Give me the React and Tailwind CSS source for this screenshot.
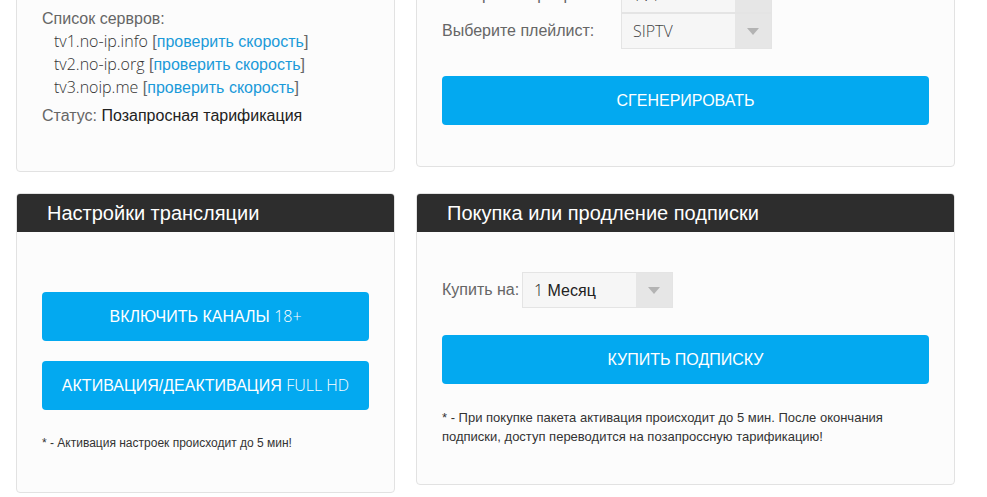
import React from 'react'

const cyr = { fontFamily: '"Liberation Sans", Arial, sans-serif' }

function Lat({ children, className = '' }) {
  // latin / digits in a lighter web-ish font, cyrillic falls back to Arial
  return (
    <span className={'font-light ' + className} style={{ fontFamily: '"Open Sans", sans-serif' }}>
      {children}
    </span>
  )
}

function Select({ children }) {
  return (
    <div className="flex h-[36px] w-[151px] border border-[#e4e4e4] bg-[#f6f6f6]">
      <div className="flex-1 self-center pl-[11px] text-[16px] text-[#222]">{children}</div>
      <div className="flex w-[36px] items-center justify-center bg-[#e6e6e6]">
        <svg width="12" height="7" viewBox="0 0 12 7">
          <path d="M0 0h12L6 7z" fill="#b3b3b3" />
        </svg>
      </div>
    </div>
  )
}

function BlueButton({ children }) {
  return (
    <button className="flex h-[49px] w-full items-center justify-center rounded-[4px] bg-[#03a9f0] text-[16px] uppercase text-white">
      <span>{children}</span>
    </button>
  )
}

function LinkLine({ host }) {
  return (
    <div className="pl-[12px]">
      <Lat className="text-[#333]">{host}</Lat>{' '}
      <span className="text-[#666]">[</span>
      <span className="text-[#1a9ad9]">проверить скорость</span>
      <span className="text-[#666]">]</span>
    </div>
  )
}

function Panel({ title, className = '', children }) {
  return (
    <div className={'rounded-[4px] border border-[#e2e2e2] bg-[#fcfcfc] ' + className}>
      <div className="flex h-[38px] items-center rounded-t-[3px] bg-[#2d2d2d] pl-[30px] text-[20px] text-white">
        {title}
      </div>
      {children}
    </div>
  )
}

export default function App() {
  return (
    <div className="min-h-screen overflow-hidden bg-white" style={cyr}>
      <div className="pl-[16px]">
        {/* top row, cut off by the window */}
        <div className="-mt-[50px] flex items-start gap-[21px]">
          <div className="w-[379px] rounded-[4px] border border-[#e2e2e2] bg-[#fcfcfc] px-[25px] pt-[56px] pb-[44px] text-[16px] leading-[23px] text-[#666]">
            <div>Список сервров:</div>
            <LinkLine host="tv1.no-ip.info" />
            <LinkLine host="tv2.no-ip.org" />
            <LinkLine host="tv3.noip.me" />
            <div className="mt-[5px]">
              Статус: <span className="text-[#222]">Позапросная тарификация</span>
            </div>
          </div>

          <div className="w-[539px] rounded-[4px] border border-[#e2e2e2] bg-[#fcfcfc] px-[25px] pt-[26px] pb-[41px]">
            <div className="flex items-center text-[16px] text-[#666]">
              <div className="w-[179px]">Выберите сервер:</div>
              <Select><Lat className="text-[#444]">TV1</Lat></Select>
            </div>
            <div className="flex items-center text-[16px] text-[#666]">
              <div className="w-[179px]">Выберите плейлист:</div>
              <Select><Lat className="text-[#444]">SIPTV</Lat></Select>
            </div>
            <div className="mt-[27px]">
              <BlueButton>СГЕНЕРИРОВАТЬ</BlueButton>
            </div>
          </div>
        </div>

        {/* bottom row */}
        <div className="mt-[21px] flex items-start gap-[21px]">
          <Panel title="Настройки трансляции" className="w-[379px]">
            <div className="px-[25px] pt-[60px] pb-[40px]">
              <BlueButton>
                ВКЛЮЧИТЬ КАНАЛЫ <Lat>18+</Lat>
              </BlueButton>
              <div className="mt-[20px]">
                <BlueButton>
                  АКТИВАЦИЯ/ДЕАКТИВАЦИЯ <Lat>FULL HD</Lat>
                </BlueButton>
              </div>
              <div className="mt-[24px] text-[12px] leading-[18px] text-[#333]">
                * - Активация настроек происходит до 5 мин!
              </div>
            </div>
          </Panel>

          <Panel title="Покупка или продление подписки" className="w-[539px]">
            <div className="px-[25px] pt-[40px] pb-[38px]">
              <div className="flex items-center text-[16px] text-[#666]">
                <div className="w-[80px]">Купить на:</div>
                <Select>
                  <Lat className="text-[#222]">1</Lat> Месяц
                </Select>
              </div>
              <div className="mt-[27px]">
                <BlueButton>КУПИТЬ ПОДПИСКУ</BlueButton>
              </div>
              <div className="mt-[24px] text-[13px] leading-[19px] text-[#333]">
                * - При покупке пакета активация происходит до 5 мин. После окончания подписки, доступ переводится на позапроссную тарификацию!
              </div>
            </div>
          </Panel>
        </div>
      </div>
    </div>
  )
}
